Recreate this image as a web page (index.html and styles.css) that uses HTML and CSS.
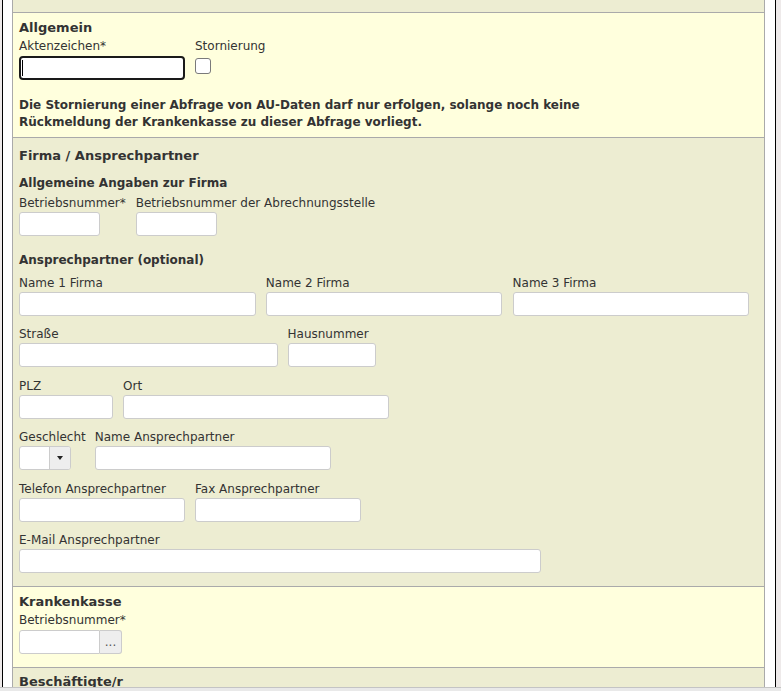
FILE: index.html
```html
<!DOCTYPE html>
<html lang="de">
<head>
<meta charset="utf-8">
<title>AU-Daten Abfrage</title>
<link rel="stylesheet" href="styles.css">
</head>
<body>
<div class="window">
  <div class="panel">
    <div class="sec sec-b stub"></div>

    <div class="sec sec-y allg">
      <div class="title">Allgemein</div>
      <div class="row">
        <div class="col">
          <label class="lbl">Aktenzeichen*</label>
          <span class="focus-wrap"><input class="inp focused w165" type="text"></span>
        </div>
        <div class="col">
          <label class="lbl">Stornierung</label>
          <input class="chk" type="checkbox">
        </div>
      </div>
      <p class="note">Die Stornierung einer Abfrage von AU-Daten darf nur erfolgen, solange noch keine<br>Rückmeldung der Krankenkasse zu dieser Abfrage vorliegt.</p>
    </div>

    <div class="sec sec-b firma">
      <div class="title">Firma / Ansprechpartner</div>
      <div class="sub sub-first">Allgemeine Angaben zur Firma</div>
      <div class="row row-first">
        <div class="col"><label class="lbl">Betriebsnummer*</label><input class="inp w80" type="text"></div>
        <div class="col"><label class="lbl">Betriebsnummer der Abrechnungsstelle</label><input class="inp w80" type="text"></div>
      </div>
      <div class="sub sub-second">Ansprechpartner (optional)</div>
      <div class="row row-a">
        <div class="col"><label class="lbl">Name 1 Firma</label><input class="inp w236" type="text"></div>
        <div class="col"><label class="lbl">Name 2 Firma</label><input class="inp w236" type="text"></div>
        <div class="col"><label class="lbl">Name 3 Firma</label><input class="inp w236" type="text"></div>
      </div>
      <div class="row row-n">
        <div class="col"><label class="lbl">Straße</label><input class="inp w258" type="text"></div>
        <div class="col"><label class="lbl">Hausnummer</label><input class="inp w87" type="text"></div>
      </div>
      <div class="row row-n">
        <div class="col"><label class="lbl">PLZ</label><input class="inp w94" type="text"></div>
        <div class="col"><label class="lbl">Ort</label><input class="inp w265" type="text"></div>
      </div>
      <div class="row row-n row-g">
        <div class="col"><label class="lbl">Geschlecht</label>
          <div class="select"><span class="sel-val"></span><span class="sel-btn"><span class="caret"></span></span></div>
        </div>
        <div class="col"><label class="lbl">Name Ansprechpartner</label><input class="inp w236" type="text"></div>
      </div>
      <div class="row row-n">
        <div class="col"><label class="lbl">Telefon Ansprechpartner</label><input class="inp w166" type="text"></div>
        <div class="col"><label class="lbl">Fax Ansprechpartner</label><input class="inp w166" type="text"></div>
      </div>
      <div class="row row-n">
        <div class="col"><label class="lbl">E-Mail Ansprechpartner</label><input class="inp w521" type="text"></div>
      </div>
    </div>

    <div class="sec sec-y kk">
      <div class="title">Krankenkasse</div>
      <div class="row">
        <div class="col"><label class="lbl">Betriebsnummer*</label>
          <div class="lookup"><input class="inp lookup-inp" type="text"><span class="lookup-btn">...</span></div>
        </div>
      </div>
    </div>

    <div class="sec sec-b besch">
      <div class="title">Beschäftigte/r</div>
    </div>
  </div>
</div>
<div class="bottombar"></div>
</body>
</html>
```

FILE: styles.css
```css
html, body {
  margin: 0;
  padding: 0;
}
body {
  width: 781px;
  height: 691px;
  overflow: hidden;
  background: #eeeaea;
  font-family: "DejaVu Sans", Verdana, sans-serif;
  font-size: 12px;
  color: #333;
  display: flex;
  flex-direction: column;
}
.window {
  margin-left: 2px;
  width: 774px;
  height: 687px;
  box-sizing: border-box;
  border-left: 1px solid #000;
  border-right: 1px solid #000;
  background: #fff;
  padding: 0 10px 0 9px;
  overflow: hidden;
  flex: none;
}
.panel {
  border-left: 1px solid #aaa;
  border-right: 1px solid #aaa;
  min-height: 100%;
}
.bottombar {
  flex: 1;
  border-top: 1px solid #c4c4c4;
  background: #e9e9e9;
}
.sec {
  padding: 0 6px;
  border-top: 1px solid #aaa;
}
.sec-y { background: #ffffdd; }
.sec-b { background: #ededd2; }
.stub {
  height: 12px;
  border-top: none;
}
.title {
  font-size: 13px;
  font-weight: bold;
  line-height: 17px;
  color: #333;
}
.allg .title,
.kk .title {
  padding-top: 1px;
  line-height: 16px;
}
.sub {
  font-size: 12px;
  font-weight: bold;
  padding-top: 3px;
  line-height: 14px;
  color: #333;
}
.lbl {
  display: block;
  padding-top: 3px;
  line-height: 14px;
  white-space: nowrap;
  color: #333;
}
.row {
  display: flex;
  gap: 10px;
  align-items: flex-start;
}
.col {
  display: flex;
  flex-direction: column;
  align-items: flex-start;
}
.inp {
  box-sizing: border-box;
  height: 24px;
  margin: 2px 0 0 0;
  border: 1px solid #ccc;
  border-radius: 3px;
  background: #fff;
  padding: 0 4px;
  font: inherit;
  outline: none;
}
.w80 { width: 81px; }
.w87 { width: 88px; }
.w94 { width: 94px; }
.w165 { width: 166px; }
.w166 { width: 166px; }
.w236 { width: 236.5px; }
.w258 { width: 258.5px; }
.w265 { width: 265.5px; }
.w521 { width: 521.5px; }

/* Allgemein */
.allg { padding-top: 6px; padding-bottom: 6.5px; }
.allg .inp { margin-top: 3px; }
.focus-wrap {
  position: relative;
  display: block;
}
.focused {
  border: 2px solid #1a1a1a;
  border-radius: 4px;
}
.focus-wrap::after {
  content: "";
  position: absolute;
  left: 3px;
  top: 7px;
  width: 1px;
  height: 16px;
  background: #000;
}
.chk {
  appearance: none;
  -webkit-appearance: none;
  width: 16px;
  height: 16px;
  margin: 5px 0 0 0;
  border: 1px solid #7a7a7a;
  border-radius: 3px;
  background: #fff;
  box-sizing: border-box;
}
.note {
  margin: 16.5px 0 0 0;
  font-weight: bold;
  line-height: 17px;
  color: #333;
}

/* Firma */
.firma { padding-top: 8.5px; padding-bottom: 13px; }
.sub-first { margin-top: 9.5px; }
.row-first { margin-top: 3px; }
.sub-second { margin-top: 14px; }
.row-a { margin-top: 5.5px; }
.row-a { gap: 10.3px; }
.row-n { margin-top: 8.5px; }
.row-g { gap: 9px; }

.select {
  display: flex;
  box-sizing: border-box;
  width: 52px;
  height: 24px;
  margin-top: 2px;
  border: 1px solid #ccc;
  border-radius: 3px;
  background: #fff;
  overflow: hidden;
}
.sel-val { width: 29px; flex: none; }
.sel-btn {
  flex: 1;
  border-left: 1px solid #ccc;
  background: #eeeeee;
  display: flex;
  align-items: center;
  justify-content: center;
}
.caret {
  width: 0;
  height: 0;
  border-left: 3.5px solid transparent;
  border-right: 3.5px solid transparent;
  border-top: 4px solid #222;
}

/* Krankenkasse */
.kk { padding-top: 6px; padding-bottom: 13px; }
.lookup {
  display: flex;
  margin-top: 3px;
}
.lookup .inp.lookup-inp {
  margin: 0;
  width: 81px;
  border-radius: 3px 0 0 3px;
}
.lookup-btn {
  box-sizing: border-box;
  width: 22px;
  height: 24px;
  border: 1px solid #ccc;
  border-left: none;
  border-radius: 0 3px 3px 0;
  background: #eeeeee;
  color: #555;
  font-size: 12px;
  line-height: 22px;
  text-align: center;
}

.besch { padding-top: 5px; height: 40px; }
```
